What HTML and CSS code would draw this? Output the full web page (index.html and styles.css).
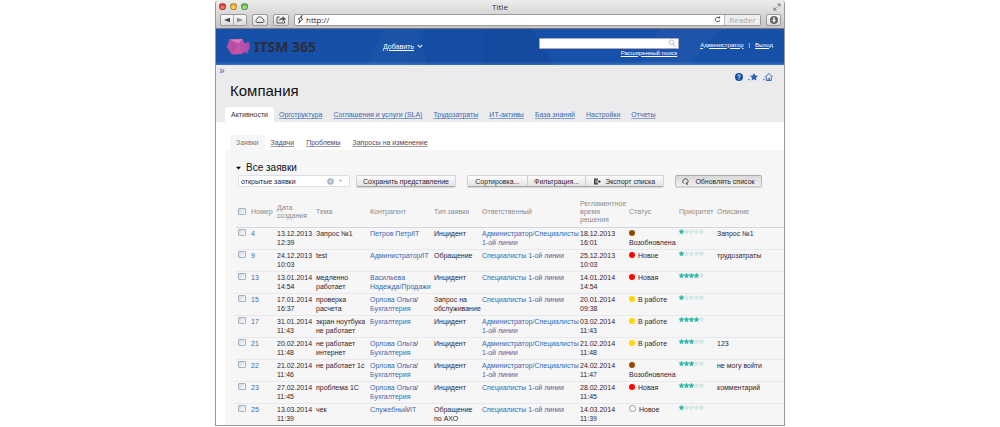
FILE: index.html
```
<!DOCTYPE html>
<html lang="ru">
<head>
<meta charset="utf-8">
<title>ITSM 365</title>
<link rel="stylesheet" href="styles.css">
</head>
<body>
<svg class="defs" aria-hidden="true">
  <symbol id="star" viewBox="0 0 10 10"><path d="M5 0l1.500 3.300 3.500.4-2.600 2.400.7 3.600L5 8 1.900 9.700l.7-3.600L0 3.700l3.500-.4z" stroke-width="1"/></symbol>
</svg>
<div class="window">
  <header class="chrome">
    <div class="titlebar">
      <div class="lights"><i class="red"></i><i class="amber"></i><i class="green"></i></div>
      <span>Title</span>
      <svg class="expand" viewBox="0 0 16 16"><path d="M9 2h5v5M14 2L9 7M2 9v5h5M2 14l5-5" fill="none" stroke="#777" stroke-width="2"/></svg>
    </div>
    <div class="toolbar">
      <div class="nav">
        <button aria-label="Назад"><svg viewBox="0 0 8 8"><path d="M8 1v6L0 4z" fill="#444"/></svg></button>
        <button aria-label="Вперёд"><svg viewBox="0 0 8 8"><path d="M0 1v6l8-3z" fill="#888"/></svg></button>
      </div>
      <button class="tool" aria-label="Облако"><svg viewBox="0 0 24 16"><path d="M6 14a4 4 0 0 1 0-7 5.500 5.500 0 0 1 10.500-1A4.500 4.500 0 0 1 18 14z" fill="none" stroke="#555" stroke-width="2"/></svg></button>
      <button class="tool" aria-label="Поделиться"><svg viewBox="0 0 24 18"><path d="M9 4H4v12h15v-4" fill="none" stroke="#555" stroke-width="2"/><path d="M8 12c0-5 3-6 7-6V2l7 6-7 5V9c-3 0-5 0-7 3z" fill="#555"/></svg></button>
      <div class="address">
        <svg class="bolt" viewBox="0 0 14 20"><path d="M11 1L2 9l4 2-3 7 9-9-4-2z" fill="#fff" stroke="#333" stroke-width="2"/></svg>
        <input type="text" value="http://" aria-label="Адрес">
        <svg class="reload" viewBox="0 0 16 16"><path d="M13 9a5 5 0 1 1-2-5" fill="none" stroke="#444" stroke-width="2"/><path d="M9 5h5V0z" fill="#444"/></svg>
        <button class="reader">Reader</button>
      </div>
      <button class="down" aria-label="Загрузки"><svg viewBox="0 0 16 16"><circle cx="8" cy="8" r="8" fill="#666"/><path d="M6.500 3h3v5H12l-4 5-4-5h2.500z" fill="#fff"/></svg></button>
    </div>
  </header>

  <div class="banner">
    <svg class="facets" viewBox="0 0 570 36" preserveAspectRatio="none" aria-hidden="true"><path d="M170 0h32l10 36h-60z" fill="#fff" opacity=".02"/><path d="M212 0h55v36h-75z" fill="#003" opacity=".03"/><path d="M267 0h50l22 36h-72z" fill="#003" opacity=".07"/><path d="M445 0h60l-30 36h-50z" fill="#fff" opacity=".03"/></svg>
    <a class="logo" href="#">
      <svg viewBox="0 0 46 32"><path d="M31 6l7 3 5-5 3 12-6 14-5-4-5 4z" fill="#b04dac"/><path d="M5 1L31 0l6 16-7 14-20 1L0 16z" fill="#c455a8"/><path d="M5 1L31 0l-8 10z" fill="#d97bb8"/><path d="M5 1L0 16l10 15 13-21z" fill="#bd4ca3"/><path d="M31 0l6 16-7 14-7-20z" fill="#b552a9"/></svg>
      <span>ITSM 365</span>
    </a>
    <a class="add" href="#"><u>Добавить</u><svg viewBox="0 0 8 6"><path d="M1 1l3 3 3-3" fill="none" stroke="#cfe0ff" stroke-width="1.500"/></svg></a>
    <div class="search">
      <div class="searchbox"><input type="text" aria-label="Поиск"><svg viewBox="0 0 16 16"><circle cx="6.500" cy="6.500" r="4.500" fill="none" stroke="#a5b0bd" stroke-width="1.500"/><path d="M10 10l5 5" stroke="#a5b0bd" stroke-width="2"/></svg></div>
      <a href="#">Расширенный поиск</a>
    </div>
    <div class="user"><a href="#">Администратор</a><span>|</span><a href="#">Выход</a></div>
  </div>

  <div class="head">
    <div class="tools">
      <a class="chev" href="#">»</a>
      <div class="quick">
        <a href="#" aria-label="Справка"><svg viewBox="0 0 16 16"><circle cx="8" cy="8" r="8" fill="#174f9f"/><path d="M5.500 6.500c0-4 5-3 5-.5 0 2-2.500 1.500-2.500 4M8 11v2" fill="none" stroke="#fff" stroke-width="2"/></svg></a>
        <a href="#" aria-label="Избранное"><svg class="wide" viewBox="0 0 20 16"><path d="M0 13h3M1.500 11.500v3" stroke="#2a63b4" stroke-width="1.200"/><path d="M12 0l2.500 5 5.500.7-4 3.800 1 5.500-5-2.600L7 15l1-5.500-4-3.800L9.500 5z" fill="#2a63b4"/></svg></a>
        <a href="#" aria-label="Домой"><svg class="wide" viewBox="0 0 20 16"><path d="M0 13h3M1.500 11.500v3" stroke="#2a63b4" stroke-width="1.200"/><path d="M4 8l8-7 7 7M6.500 7v8h10V7M10 15v-4h3v4" fill="none" stroke="#2a63b4" stroke-width="1.800"/></svg></a>
      </div>
    </div>
    <h1>Компания</h1>
    <nav class="tabs">
      <a class="on" href="#">Активности</a><a href="#">Оргструктура</a><a href="#">Соглашения и услуги (SLA)</a><a href="#">Трудозатраты</a><a href="#">ИТ-активы</a><a href="#">База знаний</a><a href="#">Настройки</a><a href="#">Отчеты</a>
    </nav>
  </div>

  <nav class="subtabs">
    <a class="on" href="#">Заявки</a><a href="#">Задачи</a><a href="#">Проблемы</a><a href="#">Запросы на изменение</a>
  </nav>

  <main class="panel">
    <h2><svg viewBox="0 0 8 6"><path d="M0 1h8L4 5.500z"/></svg>Все заявки</h2>
    <div class="actions">
      <div class="combo"><input type="text" value="открытые заявки" aria-label="Представление"><button aria-label="Очистить"><svg viewBox="0 0 16 16"><circle cx="8" cy="8" r="7.500" fill="#a9b6c6"/><path d="M5 5l6 6M11 5l-6 6" stroke="#fff" stroke-width="2"/></svg></button><button aria-label="Открыть список"><svg class="tri" viewBox="0 0 8 6"><path d="M1 1h6L4 5z" fill="#a9b6c6"/></svg></button></div>
      <button class="btn save">Сохранить представление</button>
      <div class="group">
        <button>Сортировка...</button><button>Фильтрация...</button><button><svg viewBox="0 0 16 14"><path d="M0 0h9v4H7v6h2v4H0z" fill="#444"/><path d="M3 4h4M3 7h8M3 10h4" stroke="#eee" stroke-width="1.200"/><path d="M8 6h3V3l5 4-5 4V8H8z" fill="#444"/></svg>Экспорт списка</button>
      </div>
      <button class="btn refresh"><svg viewBox="0 0 16 16"><path d="M5 13a6 6 0 1 1 7-1" fill="none" stroke="#444" stroke-width="2"/><path d="M9 9v6h6z" fill="#444"/></svg>Обновлять список</button>
    </div>

    <table>
      <colgroup><col class="c-check"><col class="c-num"><col class="c-date"><col class="c-topic"><col class="c-client"><col class="c-type"><col class="c-resp"><col class="c-due"><col class="c-status"><col class="c-prio"><col></colgroup>
      <thead><tr><th><input type="checkbox" aria-label="Выбрать все"></th><th>Номер</th><th>Дата создания</th><th>Тема</th><th>Контрагент</th><th>Тип заявки</th><th>Ответственный</th><th>Регламентное время решения</th><th>Статус</th><th>Приоритет</th><th>Описание</th></tr></thead>
      <tbody id="rows"></tbody>
    </table>
  </main>
</div>
<script src="rows.js"></script>
</body>
</html>
```
FILE: rows.js
```
const ADMIN = '<a href="#">Администратор/Специалисты<br>1-ой линии</a>';
const LINE1 = '<a href="#">Специалисты 1-ой линии</a>';
const ORLOVA = '<a href="#">Орлова Ольга</a>/<br><a href="#">Бухгалтерия</a>';

const rows = [
  [4, '13.12.2013 12:39', 'Запрос №1', '<a href="#">Петров Петр</a>/<a href="#">IT</a>', 'Инцидент', ADMIN, '18.12.2013 16:01', 'brown', '<br>Возобновлена', 1, 'Запрос №1'],
  [9, '24.12.2013 10:03', 'test', '<a href="#">Администратор</a>/<a href="#">IT</a>', 'Обращение', LINE1, '25.12.2013 10:03', 'red', 'Новое', 1, 'трудозатраты'],
  [13, '13.01.2014 14:54', 'медленно работает', '<a href="#">Васильева Надежда/Продажи</a>', 'Инцидент', LINE1, '14.01.2014 14:54', 'red', 'Новая', 4, ''],
  [15, '17.01.2014 16:37', 'проверка расчета', ORLOVA, 'Запрос на обслуживание', LINE1, '20.01.2014 09:38', 'yellow', 'В работе', 1, ''],
  [17, '31.01.2014 11:43', 'экран ноутбука не работает', '<a href="#">Бухгалтерия</a>', 'Инцидент', ADMIN, '03.02.2014 11:43', 'yellow', 'В работе', 4, ''],
  [21, '20.02.2014 11:48', 'не работает интернет', ORLOVA, 'Инцидент', ADMIN, '21.02.2014 11:48', 'yellow', 'В работе', 3, '123'],
  [22, '21.02.2014 11:46', 'не работает 1с', ORLOVA, 'Инцидент', ADMIN, '24.02.2014 11:47', 'brown', '<br>Возобновлена', 3, 'не могу войти'],
  [23, '27.02.2014 11:45', 'проблема 1С', ORLOVA, 'Инцидент', LINE1, '28.02.2014 11:45', 'red', 'Новая', 3, 'комментарий'],
  [25, '13.03.2014 11:39', 'чек', '<a href="#">Служебный</a>/<a href="#">IT</a>', 'Обращение<br>по АХО', LINE1, '14.03.2014 11:39', 'empty', 'Новое', 1, '']
];

const stars = n => [1, 2, 3, 4, 5]
  .map(i => `<svg class="${i > n ? 'off' : ''}"><use href="#star"/></svg>`)
  .join('');

document.getElementById('rows').innerHTML = rows.map(r => `<tr>
  <td><input type="checkbox" aria-label="Выбрать ${r[0]}"></td>
  <td><a href="#">${r[0]}</a></td><td>${r[1]}</td><td>${r[2]}</td><td>${r[3]}</td><td>${r[4]}</td>
  <td class="resp">${r[5]}</td><td>${r[6]}</td><td><i class="dot ${r[7]}"></i> ${r[8]}</td>
  <td><div class="stars">${stars(r[9])}</div></td><td>${r[10]}</td></tr>`).join('');
```
FILE: styles.css
```
* { box-sizing: border-box; }
body { margin: 0; background: #fff; font: 7px/9px "Liberation Sans", Arial, sans-serif; color: #33232f; }
button, input { font: inherit; color: inherit; margin: 0; padding: 0; border: 0; background: none; }
a { color: #3c68ad; text-decoration: none; }
svg { display: block; flex: none; }
.defs { position: absolute; width: 0; height: 0; }

.window { max-width: 570px; margin: 0 auto; border: 1px solid #999; border-top: 0; border-radius: 4px 4px 0 0; overflow: hidden; background: #fff; }

/* browser frame */
.chrome { background: linear-gradient(#ececec, #c4c4c4); border-bottom: 1px solid #777; font-family: "Open Sans", sans-serif; }
.titlebar { display: grid; grid-template-columns: 1fr auto 1fr; align-items: center; height: 13px; padding: 0 3px; font-size: 8px; color: #333; }
.lights { display: flex; gap: 4px; }
.lights i { width: 7px; height: 7px; border-radius: 50%; border: 1px solid #0004; }
.lights .red { background: radial-gradient(circle at 50% 80%, #ff8a80, #d3201c); }
.lights .amber { background: radial-gradient(circle at 50% 80%, #ffe27a, #e59a1c); }
.lights .green { background: radial-gradient(circle at 50% 80%, #b5f090, #4da53c); }
.expand { width: 8px; height: 8px; justify-self: end; }
.toolbar { display: flex; align-items: center; gap: 5px; height: 15px; padding: 0 3px 2px 4px; }
.toolbar button { display: flex; align-items: center; justify-content: center; }
.nav, .toolbar .tool, .toolbar .down, .address { height: 12px; border: 1px solid #9a9a9a; border-radius: 2px; background: linear-gradient(#fafafa, #dcdcdc); }
.nav { display: flex; width: 27px; }
.nav button { flex: 1; }
.nav button + button { border-left: 1px solid #aaa; }
.nav svg { width: 6px; height: 6px; }
.tool { width: 16px; }
.tool svg { width: 12px; height: 9px; }
.down { width: 15px; }
.down svg { width: 8px; height: 8px; }
.toolbar .address { display: flex; align-items: center; flex: 1; background: #fff; padding-left: 2px; }
.address input { flex: 1; min-width: 0; height: 10px; font: 8px/10px "Open Sans", sans-serif; padding-left: 2px; }
.bolt { width: 7px; height: 9px; }
.reload { width: 7px; height: 7px; margin-right: 3px; }
.reader { width: 36px; height: 10px; border-left: 1px solid #bbb; background: #eee; color: #aaa; font-size: 8px; }

/* application header */
.banner { position: relative; display: flex; align-items: center; height: 36px; padding: 0 11px; background: linear-gradient(#1750a8 0 90%, #3873c4); color: #fff; }
.banner a { color: #fff; }
.facets { position: absolute; inset: 0; width: 100%; height: 100%; }
.logo, .add, .search, .user { position: relative; }
.logo { display: flex; align-items: center; gap: 4px; width: 156px; font: bold 14px/16px "Noto Sans", sans-serif; }
.logo svg { width: 23px; height: 16px; }
.banner .logo span { color: #2c2e3a; }
.add { display: flex; align-items: center; gap: 3px; flex: 1; padding-bottom: 2px; }
.add svg { width: 6px; height: 5px; }
.search { width: 140px; margin-right: 21px; text-align: right; font-size: 6px; line-height: 8px; }
.search a, .user a { text-decoration: underline; }
.searchbox { display: flex; align-items: center; height: 11px; background: #fff; padding-right: 2px; border: 1px solid #aab; border-radius: 1px; }
.searchbox input { flex: 1; min-width: 0; height: 9px; color: #333; }
.searchbox svg { width: 8px; height: 8px; }
.search > a { margin-right: 2px; }
.user { display: flex; gap: 5px; padding-bottom: 4px; font-size: 6px; }

/* page heading and tabs */
.head { background: #ebebee; padding: 1px 9px 0; }
.tools { display: flex; justify-content: space-between; height: 16px; margin-left: -6px; }
.chev { font-size: 10px; line-height: 9px; }
.quick { display: flex; align-items: center; gap: 5px; padding: 6px 2px 0 0; }
.quick svg { width: 8px; height: 8px; }
.quick .wide { width: 10px; }
h1 { margin: 0; padding: 1px 0 0 5px; font: 15px/16px "Liberation Sans", Arial, sans-serif; color: #111; }
.tabs { display: flex; gap: 11px; padding-top: 8px; }
.tabs a { line-height: 9px; padding: 3px 0; text-decoration: underline; text-decoration-color: #3c68ad90; text-underline-offset: 1px; }
.tabs .on { padding: 3px 6px; margin-right: -6px; background: #fff; color: #333; text-decoration: none; border-radius: 3px 3px 0 0; }
.subtabs { display: flex; gap: 12px; padding: 13px 0 0 14px; }
.subtabs a { padding: 3px 0; color: #55485a; text-decoration: underline; text-decoration-color: #55485a90; text-underline-offset: 1px; }
.subtabs .on { padding: 3px 6px; margin-right: -6px; background: #f6f6f6; color: #777; text-decoration: none; border-radius: 3px 3px 0 0; }

/* request list */
.panel { margin-left: 9px; padding: 12px 0 0 11px; background: #f6f6f6; }
h2 { display: flex; align-items: center; gap: 5px; margin: 0; font: 10px/12px "Liberation Sans", Arial, sans-serif; color: #111; }
h2 svg { width: 5px; height: 4px; }
.actions { display: flex; align-items: center; padding: 0 22px 0 2px; height: 14px; }
.actions button { display: flex; align-items: center; justify-content: center; gap: 4px; white-space: nowrap; }
.combo { display: flex; align-items: center; gap: 4px; width: 112px; height: 12px; margin-right: 6px; padding: 0 6px 0 2px; background: #fff; border: 1px solid #dde0ea; border-radius: 1px; }
.combo input { flex: 1; min-width: 0; height: 10px; }
.combo svg { width: 7px; height: 7px; }
.combo .tri { width: 5px; height: 4px; }
.btn, .group { height: 12px; border: 1px solid #d4d4d4; border-bottom-color: #aaa; border-radius: 2px; background: linear-gradient(#fdfdfd, #e4e4e4); box-shadow: 0 1px 1px #0002; }
.save { width: 100px; margin-right: 11px; }
.group { display: flex; flex: 1; max-width: 197px; }
.group button { flex: 1 1 59px; }
.group button:last-child { flex-basis: 78px; }
.group button + button { border-left: 1px solid #d0d0d0; }
.group svg, .refresh svg { width: 7px; height: 7px; }
.actions .refresh { gap: 6px; width: 87px; margin-left: auto; border-color: #aaa #bbb #ccc; background: linear-gradient(#d9d9d9, #f0f0f0); }

table { width: 100%; margin-top: 8px; border-collapse: collapse; table-layout: fixed; }
.c-check { width: 15px; }
.c-num { width: 26px; }
.c-date { width: 39px; }
.c-topic { width: 54px; }
.c-client { width: 64px; }
.c-type { width: 48px; }
.c-resp { width: 98px; }
.c-due { width: 49px; }
.c-status { width: 50px; }
.c-prio { width: 38px; }
th { height: 31px; padding: 1px 0 0; border-bottom: 1px solid #d5d8db; font-weight: normal; line-height: 8px; text-align: left; color: #8b8b8b; vertical-align: middle; }
td { height: 22px; padding: 1px 0 2px; border-bottom: 1px solid #e8e9ec; vertical-align: top; }
tbody tr:last-child td { border-bottom: 0; }
.resp { white-space: nowrap; }
input[type="checkbox"] { appearance: none; display: block; width: 8px; height: 7px; margin-left: 2px; border: 1px solid #a3b3c3; border-radius: 1px; background: linear-gradient(135deg, #ccd6df, #fff); }
.dot { display: inline-block; width: 6px; height: 6px; border-radius: 50%; margin-right: 1px; }
.brown { background: #944a00; }
.dot.red { background: #f00; }
.yellow { background: #ffd500; }
.empty { width: 7px; height: 7px; background: #fff; border: 1px solid #999; }
.stars { display: flex; }
.stars svg { width: 5px; height: 5px; fill: #2db8a8; stroke: #2db8a8; }
.stars .off { fill: #d0e9e6; stroke: #d0e9e6; }
```
